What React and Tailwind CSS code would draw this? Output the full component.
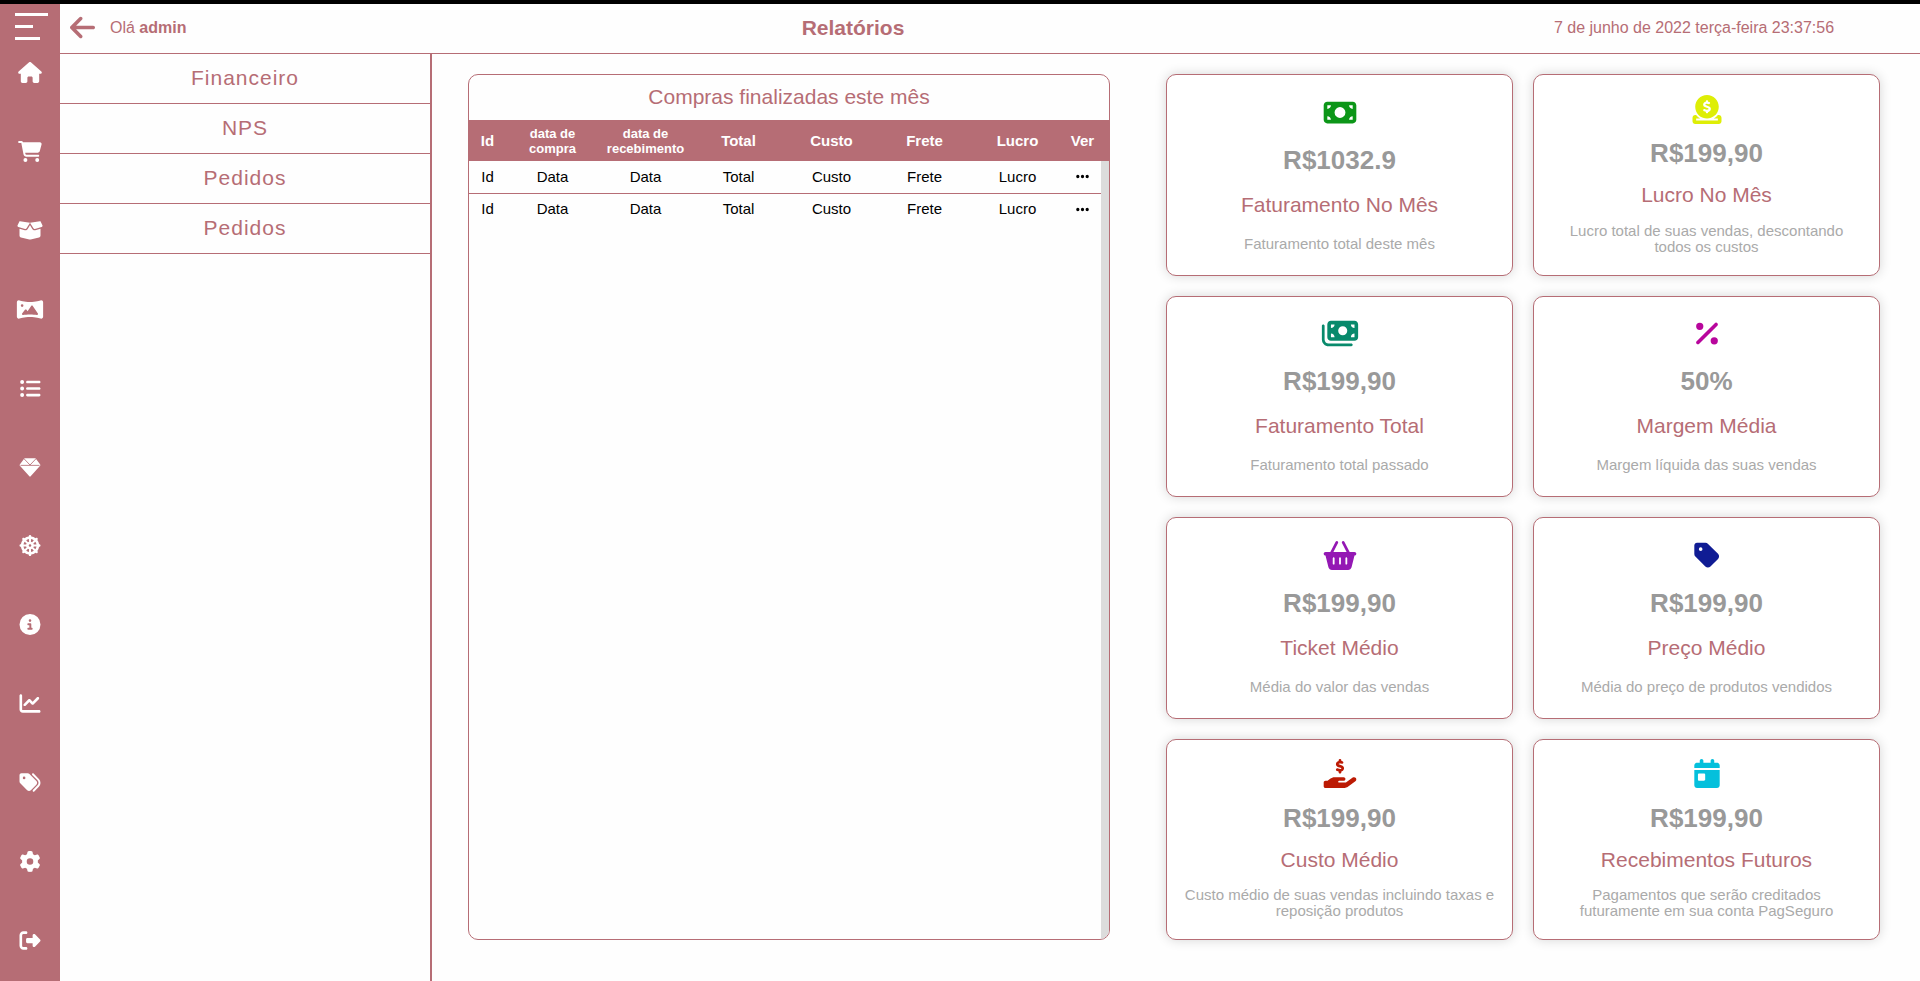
import {
  FaArrowLeft,
  FaBasketShopping,
  FaBoxOpen,
  FaCalendarDay,
  FaCartShopping,
  FaChartLine,
  FaCircleDollarToSlot,
  FaCircleInfo,
  FaDharmachakra,
  FaEllipsis,
  FaGear,
  FaHandHoldingDollar,
  FaHouse,
  FaListUl,
  FaMoneyBill,
  FaMoneyBills,
  FaPanorama,
  FaPercent,
  FaRightFromBracket,
  FaTag,
  FaTags,
} from "react-icons/fa6";

function Gem({ className }) {
  return (
    <svg viewBox="0 -4 64 64" className={className} fill="currentColor" aria-hidden="true">
      <path d="M16.500 0h31q1.500 0 2.500 1.300L63 18.500q1.600 2.300-.2 4.300L34 55q-2 2-4 0L1.200 22.800q-1.800-2-.2-4.300L14 1.300Q15 0 16.500 0z" />
      <path d="M14 1.500 32 20.500 50 1.500M3 21.500h58" fill="none" stroke="#b66d75" strokeWidth="2.600" />
    </svg>
  );
}

const NAV = [
  ["Início", FaHouse],
  ["Compras", FaCartShopping],
  ["Produtos", FaBoxOpen],
  ["Banners", FaPanorama],
  ["Categorias", FaListUl],
  ["Coleções", Gem],
  ["Navegação", FaDharmachakra],
  ["Informações", FaCircleInfo],
  ["Relatórios", FaChartLine],
  ["Promoções", FaTags],
  ["Configurações", FaGear],
  ["Sair", FaRightFromBracket],
];

const REPORTS = ["Financeiro", "NPS", "Pedidos", "Pedidos"];

const COLUMNS = [
  { label: "Id", width: "w-[37px]", text: "text-[15px]" },
  { label: "data de compra", width: "", text: "px-4 text-[13px]" },
  { label: "data de recebimento", width: "", text: "text-[13px]" },
  { label: "Total", width: "", text: "text-[15px]" },
  { label: "Custo", width: "", text: "text-[15px]" },
  { label: "Frete", width: "", text: "text-[15px]" },
  { label: "Lucro", width: "", text: "text-[15px]" },
  { label: "Ver", width: "w-[37px]", text: "text-[15px]" },
];

const ROWS = [
  ["Id", "Data", "Data", "Total", "Custo", "Frete", "Lucro"],
  ["Id", "Data", "Data", "Total", "Custo", "Frete", "Lucro"],
];

const CARDS = [
  { Icon: FaMoneyBill, color: "text-[#0c9618]", value: "R$1032.9", title: "Faturamento No Mês", text: "Faturamento total deste mês" },
  { Icon: FaCircleDollarToSlot, color: "text-[#deee06]", value: "R$199,90", title: "Lucro No Mês", text: "Lucro total de suas vendas, descontando todos os custos" },
  { Icon: FaMoneyBills, color: "text-[#088a6c]", value: "R$199,90", title: "Faturamento Total", text: "Faturamento total passado" },
  { Icon: FaPercent, color: "text-[#b8069c]", value: "50%", title: "Margem Média", text: "Margem líquida das suas vendas" },
  { Icon: FaBasketShopping, color: "text-[#9418b4]", value: "R$199,90", title: "Ticket Médio", text: "Média do valor das vendas" },
  { Icon: FaTag, color: "text-[#101c94]", value: "R$199,90", title: "Preço Médio", text: "Média do preço de produtos vendidos" },
  { Icon: FaHandHoldingDollar, color: "text-[#bc1a04]", value: "R$199,90", title: "Custo Médio", text: "Custo médio de suas vendas incluindo taxas e reposição produtos" },
  { Icon: FaCalendarDay, color: "text-[#04c0dc]", value: "R$199,90", title: "Recebimentos Futuros", text: "Pagamentos que serão creditados futuramente em sua conta PagSeguro" },
];

function Sidebar() {
  return (
    <aside className="flex w-15 shrink-0 flex-col bg-[#b66d75]">
      <button type="button" aria-label="Menu" className="flex h-10 flex-col gap-[9px] pt-[9px] pl-[15px]">
        <span className="h-[3px] w-[33px] bg-white" />
        <span className="h-[3px] w-[18px] bg-white" />
        <span className="h-[3px] w-[25px] bg-white" />
      </button>
      <nav className="flex flex-1 flex-col items-center justify-between pt-[18px] pb-[30px] text-white">
        {NAV.map(([label, Icon]) => (
          <a key={label} href="#" aria-label={label}>
            <Icon className="h-[21px] w-[30px]" />
          </a>
        ))}
      </nav>
    </aside>
  );
}

function Header() {
  return (
    <header className="grid h-[50px] grid-cols-[178px_1fr_452px] items-center border-b border-[#b66d75] pb-[2px]">
      <div className="flex items-center gap-[15px] pl-[10px]">
        <button type="button" aria-label="Voltar">
          <FaArrowLeft className="h-[29px] w-[25px]" />
        </button>
        <p className="text-base">
          Olá <strong>admin</strong>
        </p>
      </div>
      <h1 className="text-center text-[21px] font-bold">Relatórios</h1>
      <p className="text-center text-base">7 de junho de 2022 terça-feira 23:37:56</p>
    </header>
  );
}

function Purchases() {
  return (
    <section className="flex flex-col overflow-hidden rounded-[10px] border border-[#b66d75]">
      <h2 className="pb-[2px] text-center text-[21px] leading-[43px]">Compras finalizadas este mês</h2>
      <div className="flex flex-1">
        <div className="min-w-0 flex-1">
          <table className="w-full table-fixed border-collapse text-center text-[15px] leading-4">
            <thead className="bg-[#b66d75] text-white">
              <tr className="h-[41px]">
                {COLUMNS.map((c) => (
                  <th key={c.label} scope="col" className={`${c.width} ${c.text} py-0 leading-[15px] font-bold`}>
                    {c.label}
                  </th>
                ))}
              </tr>
            </thead>
            <tbody className="text-black">
              {ROWS.map((row, r) => (
                <tr key={r} className="h-8 border-b border-[#b66d75] last:border-b-0">
                  {row.map((cell, i) => (
                    <td key={i} className="p-0">
                      {cell}
                    </td>
                  ))}
                  <td className="p-0">
                    <button type="button" aria-label="Ver compra" className="block w-full">
                      <FaEllipsis className="mx-auto h-[15px] w-[15px]" />
                    </button>
                  </td>
                </tr>
              ))}
            </tbody>
          </table>
        </div>
        <div className="flex w-2 flex-col">
          <div className="h-[41px] bg-[#b66d75]" />
          <div className="flex-1 bg-[#dcdcdc]" />
        </div>
      </div>
    </section>
  );
}

function Card({ Icon, color, value, title, text }) {
  return (
    <article className="flex flex-col items-center justify-evenly rounded-[10px] border border-[#b66d75] bg-white py-1 text-center shadow-[0_0_12px_rgba(0,0,0,0.16)]">
      <Icon className={`h-[29px] w-[40px] ${color}`} />
      <p className="text-[26px] leading-[28px] font-bold text-[#999]">{value}</p>
      <h3 className="text-[21px] leading-6">{title}</h3>
      <p className="max-w-[311px] text-[15px] leading-4 text-[#aaa]">{text}</p>
    </article>
  );
}

export default function App() {
  return (
    <div className="flex min-h-screen flex-col bg-[#fefefe] font-['Liberation_Sans',Arial,sans-serif] text-[#b66d75]">
      <div className="h-1 bg-black" />
      <div className="flex flex-1">
        <Sidebar />
        <div className="flex min-w-0 flex-1 flex-col">
          <Header />
          <div className="flex flex-1">
            <nav className="w-[372px] shrink-0 border-r-2 border-[#b66d75]">
              {REPORTS.map((label, i) => (
                <a key={i} href="#" className="block h-[50px] border-b border-[#b66d75] text-center text-[21px] leading-[47px] tracking-[1px]">
                  {label}
                </a>
              ))}
            </nav>
            <main className="grid flex-1 grid-cols-[642fr_714fr] gap-14 pt-5 pr-10 pb-[41px] pl-9">
              <Purchases />
              <section className="grid auto-rows-fr grid-cols-2 gap-5">
                {CARDS.map((card) => (
                  <Card key={card.title} {...card} />
                ))}
              </section>
            </main>
          </div>
        </div>
      </div>
    </div>
  );
}
